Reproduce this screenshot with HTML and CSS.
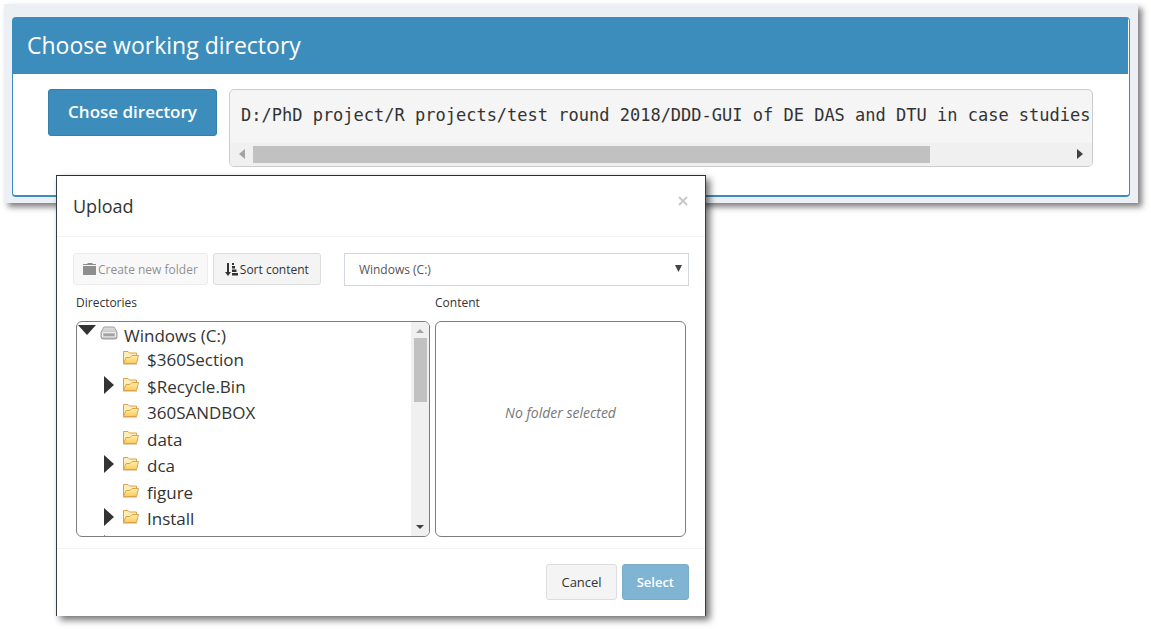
FILE: index.html
```html
<!DOCTYPE html>
<html lang="en">
<head>
<meta charset="utf-8">
<meta name="viewport" content="width=device-width, initial-scale=1">
<title>Choose working directory</title>
<link rel="stylesheet" href="styles.css">
</head>
<body>
<svg class="defs" aria-hidden="true">
  <defs>
    <linearGradient id="gold" x1="0" y1="0" x2="0" y2="1"><stop offset="0" stop-color="#ffefac"/><stop offset="1" stop-color="#fbcb5c"/></linearGradient>
    <linearGradient id="metal" x1="0" y1="0" x2="0" y2="1"><stop offset="0" stop-color="#e0e0e0"/><stop offset="1" stop-color="#a8a8a8"/></linearGradient>
    <symbol id="folder" viewBox="0 0 17 15">
      <path d="M1.5 13.5V1.5H6L7.5 3H14.5V6" fill="#fdeeb8" stroke="#d9a050"/>
      <path d="M1.5 13.5L4 7.5H8L10 5.5H16.5L14.5 13.5Z" fill="url(#gold)" stroke="#dda24c"/>
      <path d="M1 14.5H15" stroke="#c9a878" stroke-opacity=".5"/>
    </symbol>
    <symbol id="drive" viewBox="0 0 18 14">
      <path d="M4 1H14L17 6V11Q17 13 15 13H3Q1 13 1 11V6Z" fill="url(#metal)" stroke="#a0a0a0"/>
      <path d="M2.5 6.5H15.5V11H2.5Z" fill="#bdbdbd" stroke="#ececec"/>
      <path d="M4 9H14" stroke="#858585"/>
    </symbol>
    <symbol id="right" viewBox="0 0 10 18"><path d="M0 0L10 9L0 18Z" fill="#333"/></symbol>
  </defs>
</svg>

<main class="page">
  <section class="box">
    <h1 class="box-title">Choose working directory</h1>
    <div class="box-body">
      <button class="btn btn-primary btn-large" type="button">Chose directory</button>
      <div class="path">
        <pre class="path-text">D:/PhD project/R projects/test round 2018/DDD-GUI of DE DAS and DTU in case studies</pre>
        <div class="hscroll" aria-hidden="true">
          <svg class="arrow" viewBox="0 0 6 10"><path d="M6 0V10L0 5Z" fill="#a3a3a3"/></svg>
          <div class="hscroll-track"><div class="hscroll-thumb"></div></div>
          <svg class="arrow" viewBox="0 0 6 10"><path d="M0 0V10L6 5Z" fill="#404040"/></svg>
        </div>
      </div>
    </div>
  </section>
</main>

<div class="modal" role="dialog" aria-labelledby="modal-title">
  <header class="modal-header">
    <h2 class="modal-title" id="modal-title">Upload</h2>
    <button class="close" type="button" aria-label="Close"><svg viewBox="0 0 10 10" width="10" height="10"><path d="M1 1L9 9M9 1L1 9" stroke="#c8c8c8" stroke-width="2"/></svg></button>
  </header>
  <div class="modal-body">
    <div class="toolbar">
      <button class="btn btn-default" type="button" disabled>
        <svg viewBox="0 0 13 12" width="13" height="12"><path d="M0 1H4L5 0H9L10 1H13V2H0ZM0 3H13V12H0Z" fill="#333"/></svg>
        Create new folder
      </button>
      <button class="btn btn-default btn-sort" type="button">
        <svg viewBox="0 0 13 13" width="13" height="13"><path d="M2 0H4V9H6L3 13L0 9H2ZM7 0H9V2H7ZM7 3H10V5.500H7ZM7 6.500H11.500V9H7ZM7 10H13V12.500H7Z" fill="#333"/></svg>
        Sort content
      </button>
      <div class="select-wrap">
        <select class="volume" aria-label="Volume"><option>Windows (C:)</option></select>
        <svg class="caret" viewBox="0 0 6 6" aria-hidden="true"><path d="M0 0H6L3 6Z" fill="#444"/></svg>
      </div>
    </div>
    <div class="panes">
      <section class="pane">
        <h3 class="pane-title">Directories</h3>
        <div class="pane-box">
          <div class="tree">
            <div class="root"><svg class="down" viewBox="0 0 18 10"><path d="M0 0H18L9 10Z" fill="#333"/></svg><svg class="drive"><use href="#drive"/></svg><span>Windows (C:)</span></div>
            <ul class="nodes">
              <li class="node"><span class="toggle"></span><svg class="folder"><use href="#folder"/></svg><span>$360Section</span></li>
              <li class="node"><svg class="toggle"><use href="#right"/></svg><svg class="folder"><use href="#folder"/></svg><span>$Recycle.Bin</span></li>
              <li class="node"><span class="toggle"></span><svg class="folder"><use href="#folder"/></svg><span>360SANDBOX</span></li>
              <li class="node"><span class="toggle"></span><svg class="folder"><use href="#folder"/></svg><span>data</span></li>
              <li class="node"><svg class="toggle"><use href="#right"/></svg><svg class="folder"><use href="#folder"/></svg><span>dca</span></li>
              <li class="node"><span class="toggle"></span><svg class="folder"><use href="#folder"/></svg><span>figure</span></li>
              <li class="node"><svg class="toggle"><use href="#right"/></svg><svg class="folder"><use href="#folder"/></svg><span>Install</span></li>
              <li class="node"><svg class="toggle"><use href="#right"/></svg></li>
            </ul>
          </div>
          <div class="vscroll" aria-hidden="true">
            <svg class="varrow" viewBox="0 0 8 4"><path d="M0 4H8L4 0Z" fill="#a3a3a3"/></svg>
            <div class="vscroll-track"><div class="vscroll-thumb"></div></div>
            <svg class="varrow" viewBox="0 0 8 4"><path d="M0 0H8L4 4Z" fill="#404040"/></svg>
          </div>
        </div>
      </section>
      <section class="pane">
        <h3 class="pane-title">Content</h3>
        <div class="pane-box"><p class="empty">No folder selected</p></div>
      </section>
    </div>
  </div>
  <footer class="modal-footer">
    <button class="btn btn-default btn-medium" type="button">Cancel</button>
    <button class="btn btn-primary btn-medium btn-strong" type="button" disabled>Select</button>
  </footer>
</div>
</body>
</html>
```
FILE: styles.css
```css
* { box-sizing: border-box; }

html { background: #fff; }

body {
  min-height: 100vh;
  margin: 0;
  padding: 4px 13px 0 4px;
  color: #333;
  font-family: "Source Sans Pro", "Open Sans", sans-serif;
}

h1, h2, h3, p, pre, ul { margin: 0; padding: 0; font-weight: 400; }
svg { display: block; flex: none; }
.defs { position: absolute; width: 0; height: 0; }

.page {
  padding: 13px 8px 6px;
  background: #ecf0f5;
  box-shadow: 4px 4px 6px rgba(0, 0, 0, .5);
}

.box {
  padding-right: 1px;
  border: 1px solid #3c8dbc;
  border-bottom-width: 2px;
  border-radius: 4px;
  background: #fff;
}

.box-title {
  padding: 9px 14px 11px;
  background: #3c8dbc;
  color: #fff;
  font-size: 23px;
  line-height: 36px;
}

.box-body {
  display: flex;
  align-items: flex-start;
  gap: 12px;
  padding: 15px 35px 28px 35px;
}

.btn {
  display: flex;
  align-items: center;
  justify-content: center;
  gap: 3px;
  margin: 0;
  padding: 0 11px;
  border: 1px solid #ddd;
  border-radius: 3px;
  font-family: inherit;
  font-size: 12px;
  white-space: nowrap;
}
.btn-default { background: #f4f4f4; color: #333; }
.btn-primary { background: #3c8dbc; border-color: #367fa9; color: #fff; }
.btn-large { flex: none; width: 169px; height: 47px; padding-bottom: 2px; font-size: 17px; font-weight: 600; }
.btn-medium { height: 36px; padding: 0 14px; font-size: 13px; }
.btn-strong { font-weight: 600; }
.btn:disabled { opacity: .65; }
.btn-default:disabled { opacity: .55; }

.path {
  flex: 1;
  min-width: 0;
  overflow: hidden;
  border: 1px solid #ccc;
  border-radius: 5px;
  background: #f5f5f5;
}
.path-text {
  padding: 11px 0 14px 11px;
  overflow: hidden;
  font-family: "DejaVu Sans Mono", monospace;
  font-size: 17px;
  line-height: 28px;
}
.hscroll {
  display: flex;
  align-items: center;
  gap: 8px;
  height: 23px;
  padding: 0 9px 1px;
  background: #f0f0f0;
}
.arrow { width: 6px; height: 10px; }
.hscroll-track { flex: 1; }
.hscroll-thumb { width: 83%; height: 17px; background: #c1c1c1; }

.modal {
  position: absolute;
  top: 175px;
  left: 56px;
  width: 650px;
  max-width: calc(100% - 70px);
  border: 1px solid #333c44;
  border-top-color: #1a3341;
  border-bottom: 0;
  background: #fff;
  box-shadow: 4px 4px 7px rgba(0, 0, 0, .55);
}
.modal-header {
  display: flex;
  justify-content: space-between;
  align-items: flex-start;
  padding: 16px 17px 15px 16px;
  border-bottom: 1px solid #f4f4f4;
}
.modal-title { font-size: 18px; line-height: 29px; }
.close { padding: 4px 0; border: 0; background: none; }

.modal-body { padding: 16px 16px 11px; border-bottom: 1px solid #f4f4f4; }
.toolbar { display: flex; gap: 5px; align-items: flex-start; }
.toolbar .btn { gap: 2px; height: 32px; padding: 0 9px; }
.toolbar .btn-sort { padding: 0 11px; }
.select-wrap { position: relative; flex: 1; margin-left: 18px; }
.volume {
  display: block;
  width: 100%;
  height: 33px;
  padding: 0 14px;
  border: 1px solid #d2d6de;
  border-radius: 0;
  appearance: none;
  background: #fff;
  color: #555;
  font-family: inherit;
  font-size: 12px;
}
.caret { position: absolute; top: 12px; right: 7px; width: 7px; height: 7px; pointer-events: none; }

.panes {
  display: grid;
  grid-template-columns: 354fr 251fr;
  gap: 5px;
  padding: 6px 3px 0;
}
.pane-title { padding-bottom: 7px; font-size: 12px; line-height: 22px; }
.pane-box {
  display: flex;
  height: 216px;
  overflow: hidden;
  border: 1px solid #7d7d7d;
  border-radius: 6px;
}
.tree { flex: 1; font-size: 17px; }
.root { display: flex; gap: 6px; align-items: flex-start; padding-left: 1px; line-height: 27px; height: 25px; }
.down { width: 18px; height: 10px; margin-top: 3px; margin-right: -2px; }
.drive { width: 18px; height: 14px; margin-top: 4px; }
.nodes { list-style: none; padding-left: 27px; }
.node { display: flex; gap: 8px; height: 26px; line-height: 26px; }
.node:nth-child(odd) { height: 27px; }
.toggle { width: 10px; height: 18px; margin-top: 2px; }
.folder { width: 17px; height: 15px; margin-top: 3px; }

.vscroll {
  display: flex;
  flex-direction: column;
  align-items: center;
  gap: 5px;
  width: 18px;
  padding: 7px 0;
  background: #f0f0f0;
}
.varrow { width: 8px; height: 4px; }
.vscroll-track { flex: 1; width: 13px; }
.vscroll-thumb { height: 64px; background: #c1c1c1; }

.empty { flex: 1; padding-top: 80px; color: #777; font-size: 14px; font-style: italic; line-height: 22px; text-align: center; }

.modal-footer {
  display: flex;
  justify-content: flex-end;
  gap: 5px;
  padding: 15px 16px 16px;
}
```
